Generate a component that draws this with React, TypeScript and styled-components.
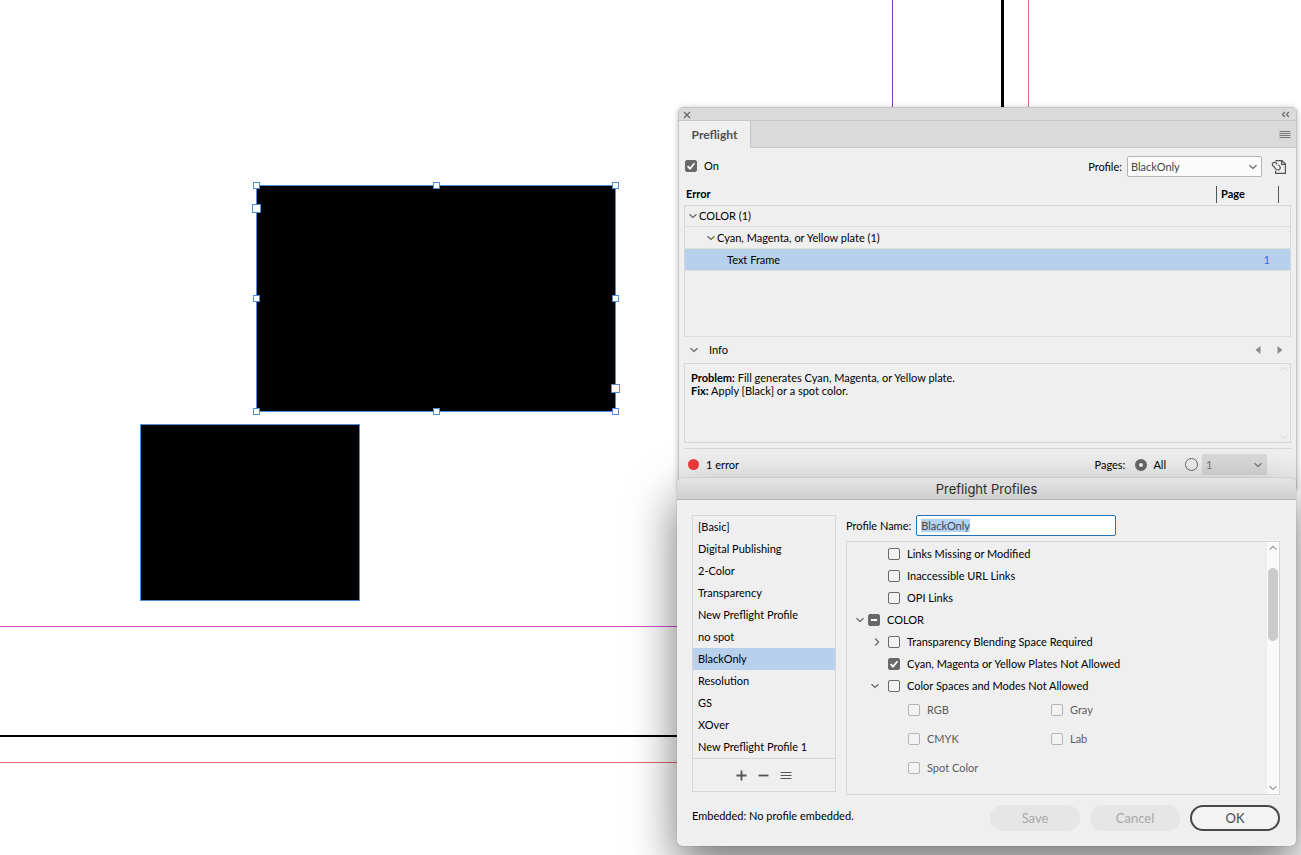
import React, { useEffect, useRef } from "react";
import styled, { createGlobalStyle, css } from "styled-components";

const Global = createGlobalStyle`
  *, *::before, *::after { box-sizing: border-box; }
  body {
    margin: 0;
    background: #fff;
    color: #000;
    font-family: Lato, "Liberation Sans", sans-serif;
    font-size: 11px;
    line-height: 14px;
  }
  button, input, select { font: inherit; color: inherit; margin: 0; }
`;

const line = "#d6d6d6";
const selected = "#b7d1ed";
const glyph = "#555";

/* ---------- document canvas ---------- */

const Desktop = styled.main`
  position: relative;
  height: 100vh;
  min-height: 855px;
  overflow: hidden;
`;

const Guide = styled.div<{ $w: number; $h: number; $right: string; $bottom: string }>`
  position: absolute;
  left: 0;
  top: 0;
  width: ${(p) => p.$w}px;
  height: ${(p) => p.$h}px;
  border-right: ${(p) => p.$right};
  border-bottom: ${(p) => p.$bottom};
`;

const Frame = styled.div<{ $x: number; $y: number; $w: number; $h: number }>`
  position: absolute;
  left: ${(p) => p.$x}px;
  top: ${(p) => p.$y}px;
  width: ${(p) => p.$w}px;
  height: ${(p) => p.$h}px;
  background: #000;
  border: 1px solid #4f8fd8;
`;

const Handles = styled.div`
  position: absolute;
  inset: -1px 0 0 -1px;
`;

const Handle = styled.i<{ $left: string; $top: string; $large?: boolean }>`
  position: absolute;
  left: ${(p) => p.$left};
  top: ${(p) => p.$top};
  width: ${(p) => (p.$large ? 9 : 7)}px;
  height: ${(p) => (p.$large ? 9 : 7)}px;
  margin: ${(p) => (p.$large ? -4 : -3)}px;
  background: #fff;
  border: 1px solid #4f8fd8;
`;

/* ---------- shared parts ---------- */

const Window = styled.section<{ $top: number; $right: number }>`
  position: absolute;
  top: ${(p) => p.$top}px;
  right: ${(p) => p.$right}px;
  width: 619px;
  max-width: 100%;
  background: #efefef;
`;

const IconButton = styled.button<{ $color?: string }>`
  display: grid;
  place-items: center;
  padding: 0;
  border: 0;
  background: none;
  color: ${(p) => p.$color ?? glyph};
  svg { display: block; }
`;

const Row = styled.div<{ $gap?: number }>`
  display: flex;
  align-items: center;
  gap: ${(p) => p.$gap ?? 0}px;
`;

const Spacer = styled.span<{ $w?: number }>`
  flex: ${(p) => (p.$w ? `0 0 ${p.$w}px` : "1")};
`;

const Stack = styled.span`
  display: grid;
  place-items: center;
  flex: none;
  > * { grid-area: 1 / 1; }
  svg { pointer-events: none; }
`;

const Box = styled.input`
  appearance: none;
  width: 12px;
  height: 12px;
  border: 1px solid #6a6a6a;
  border-radius: 2px;
  background: #f3f3f3;
  &:checked { background: #686868; }
  &:indeterminate { background: #686868; }
  &:disabled { border-color: #b4b4b4; }
`;

const Check = styled.label<{ $dim?: boolean }>`
  display: flex;
  align-items: center;
  gap: 7px;
  white-space: nowrap;
  color: ${(p) => (p.$dim ? "#5c5c5c" : "inherit")};
`;

const Radio = styled.input`
  appearance: none;
  width: 13px;
  height: 13px;
  border: 1px solid #6a6a6a;
  border-radius: 50%;
  &:checked {
    width: 12px;
    height: 12px;
    border: 4px solid #686868;
    background: #f5f5f5;
  }
`;

const Select = styled.select`
  appearance: none;
  width: 100%;
  height: 21px;
  padding: 0 20px 0 3px;
  border: 1px solid #b5b5b5;
  border-radius: 2px;
  background: #fbfbfb;
  color: #444;
  &:disabled {
    border-color: #dadada;
    background: #dadada;
    color: #777;
    opacity: 1;
  }
`;

const SelectShell = styled.span<{ $w: number }>`
  display: grid;
  align-items: center;
  width: ${(p) => p.$w}px;
  > * { grid-area: 1 / 1; }
  svg { justify-self: end; margin-right: 4px; pointer-events: none; }
`;

type Dir = "down" | "up" | "right";
const chevrons: Record<Dir, string> = {
  down: "M1.5 3.2 L5 6.5 L8.5 3.2",
  up: "M1.5 6.6 L5 3.3 L8.5 6.6",
  right: "M3.3 1.5 L6.6 5 L3.3 8.5",
};
const Chevron = ({ dir = "down", color = "#666" }: { dir?: Dir; color?: string }) => (
  <svg width="10" height="10" viewBox="0 0 10 10" fill="none" stroke={color} strokeWidth="1.2">
    <path d={chevrons[dir]} />
  </svg>
);

const Bars = ({ rows, color = glyph }: { rows: number[]; color?: string }) => (
  <svg width="12" height="10" viewBox="0 0 12 10" stroke={color} strokeWidth="1">
    {rows.map((y) => (
      <path key={y} d={`M1 ${y}.5H11`} strokeLinecap="square" />
    ))}
  </svg>
);

type TickProps = {
  label: string;
  checked?: boolean;
  mixed?: boolean;
  disabled?: boolean;
};
const Tick = ({ label, checked, mixed, disabled }: TickProps) => {
  const ref = useRef<HTMLInputElement>(null);
  useEffect(() => {
    if (ref.current) ref.current.indeterminate = !!mixed;
  }, [mixed]);
  return (
    <Check $dim={disabled}>
      <Stack>
        <Box ref={ref} type="checkbox" defaultChecked={checked} disabled={disabled} />
        {checked && (
          <svg width="12" height="12" viewBox="0 0 12 12" fill="none" stroke="#fff" strokeWidth="1.8">
            <path d="M2.6 6.2 L5 8.7 L9.4 3.2" />
          </svg>
        )}
        {mixed && (
          <svg width="12" height="12" viewBox="0 0 12 12" fill="#fff">
            <path d="M3 5h6v2H3z" />
          </svg>
        )}
      </Stack>
      {label}
    </Check>
  );
};

/* ---------- Preflight panel ---------- */

const PanelWindow = styled(Window)`
  border: 1px solid #c4c4c4;
  border-radius: 5px 5px 0 0;
  box-shadow: 0 1px 6px rgba(0, 0, 0, 0.25);
`;

const Grip = styled.header`
  display: flex;
  align-items: center;
  justify-content: space-between;
  height: 13px;
  padding: 1px 6px 0 4px;
  border-bottom: 1px solid #c6c6c6;
  border-radius: 4px 4px 0 0;
  background: #dadada;
`;

const TabBar = styled.nav`
  display: flex;
  height: 27px;
  padding-right: 5px;
  background: #dadada;
  box-shadow: inset 0 -1px #c6c6c6;
`;

const Tab = styled.button`
  width: 72px;
  padding: 0;
  border: 0;
  border-right: 1px solid #c6c6c6;
  background: #efefef;
  color: #505050;
  font-size: 12px;
  font-weight: 700;
`;

const PanelBody = styled.div`
  padding: 8px 5px 13px;
`;

const ProfileRow = styled(Row)`
  height: 21px;
  padding: 0 4px 0 1px;
  > label:first-child { margin-bottom: 2px; }
`;

const ErrorTable = styled.table`
  width: 100%;
  margin-top: 7px;
  border-spacing: 0;
  table-layout: fixed;
  th, td { padding: 0; text-align: left; }
  th { height: 21px; padding: 0 0 2px 2px; }
  th:last-child { width: 75px; padding: 0; }
  td { height: 22px; border-bottom: 1px solid #dcdcdc; }
  td:first-child { border-left: 1px solid ${line}; }
  td:last-child { border-right: 1px solid ${line}; }
  tbody tr:first-child td { border-top: 1px solid ${line}; }
`;

const PageHead = styled.span`
  display: block;
  width: 63px;
  height: 17px;
  padding-left: 4px;
  border: solid #555;
  border-width: 0 1px;
  line-height: 16px;
`;

const Indent = styled.div<{ $by: number }>`
  display: flex;
  align-items: center;
  gap: 1px;
  padding-left: ${(p) => p.$by}px;
`;

const ErrorRow = styled.tr<{ $selected?: boolean }>`
  ${(p) =>
    p.$selected &&
    css`
      background: ${selected};
    `}
  td:last-child { padding-right: 20px; text-align: right; color: #0f7aea; }
`;

const Filler = styled.tr`
  && td { height: 66px; }
`;

const InfoHead = styled(Row)`
  height: 26px;
  padding: 0 7px 0 5px;
`;

const InfoBox = styled.div`
  display: flex;
  justify-content: space-between;
  height: 80px;
  padding: 7px 1px 0 6px;
  border: 1px solid ${line};
  p { margin: 0; line-height: 13px; }
`;

const FaintArrows = styled.div`
  display: flex;
  flex-direction: column;
  justify-content: space-between;
  margin-top: -7px;
`;

const StatusRow = styled(Row)`
  height: 27px;
  margin-top: 5px;
  padding: 5px 24px 0 4px;
  border-top: 1px solid ${line};
`;

const Dot = styled.span`
  width: 11px;
  height: 11px;
  margin-right: 7px;
  border-radius: 50%;
  background: #ee3a3c;
`;

const RadioLabel = styled.label`
  display: flex;
  align-items: center;
  gap: 6px;
  margin-left: 10px;
`;

const EmbedIcon = () => (
  <svg width="16" height="16" viewBox="0 0 16 16" fill="none" stroke={glyph} strokeWidth="1.2">
    <path d="M5 2.4V1.6H11L14.4 5V14.4H4.6V11.8" />
    <path d="M10.6 1.6V5.4H14.4" />
    <path d="M5.8 5.4C5.6 3 1.6 2.6 1.3 5.2C1.2 7.2 3.2 7.4 4 9C5 11.4 8.8 12 9.3 9C9.4 7.6 8.8 6.6 7.4 6" />
  </svg>
);

const Preflight = () => (
  <PanelWindow $top={107} $right={4}>
    <Grip>
      <IconButton aria-label="Close" $color="#666">
        <svg width="8" height="8" viewBox="0 0 8 8" stroke="currentColor" strokeWidth="1.3">
          <path d="M1 1L7 7M7 1L1 7" />
        </svg>
      </IconButton>
      <IconButton aria-label="Collapse" $color="#666">
        <svg width="9" height="7" viewBox="0 0 9 7" fill="none" stroke="currentColor" strokeWidth="1.2">
          <path d="M3.8 1L1.5 3.5L3.8 6M7.8 1L5.5 3.5L7.8 6" />
        </svg>
      </IconButton>
    </Grip>
    <TabBar>
      <Tab>Preflight</Tab>
      <Spacer />
      <IconButton aria-label="Panel menu">
        <Bars rows={[1, 3, 5, 7]} color="#777" />
      </IconButton>
    </TabBar>
    <PanelBody>
      <ProfileRow>
        <Tick label="On" checked />
        <Spacer />
        <Row as="label" $gap={5}>
          Profile:
          <SelectShell $w={135}>
            <Select defaultValue="BlackOnly">
              <option>BlackOnly</option>
            </Select>
            <Chevron />
          </SelectShell>
        </Row>
        <Spacer $w={9} />
        <IconButton aria-label="Embed profile">
          <EmbedIcon />
        </IconButton>
      </ProfileRow>
      <ErrorTable>
        <thead>
          <tr>
            <th>Error</th>
            <th>
              <PageHead>Page</PageHead>
            </th>
          </tr>
        </thead>
        <tbody>
          <ErrorRow>
            <td>
              <Indent $by={3}>
                <Chevron />
                COLOR (1)
              </Indent>
            </td>
            <td />
          </ErrorRow>
          <ErrorRow>
            <td>
              <Indent $by={21}>
                <Chevron />
                Cyan, Magenta, or Yellow plate (1)
              </Indent>
            </td>
            <td />
          </ErrorRow>
          <ErrorRow $selected>
            <td>
              <Indent $by={42}>Text Frame</Indent>
            </td>
            <td>1</td>
          </ErrorRow>
          <Filler>
            <td />
            <td />
          </Filler>
        </tbody>
      </ErrorTable>
      <InfoHead>
        <Row $gap={10}>
          <Chevron />
          Info
        </Row>
        <Spacer />
        <Row $gap={14}>
          <IconButton aria-label="Previous" $color="#8c8c8c">
            <svg width="8" height="8" viewBox="0 0 8 8" fill="currentColor">
              <path d="M6.5 0V8L1.5 4Z" />
            </svg>
          </IconButton>
          <IconButton aria-label="Next" $color="#8c8c8c">
            <svg width="8" height="8" viewBox="0 0 8 8" fill="currentColor">
              <path d="M1.5 0V8L6.5 4Z" />
            </svg>
          </IconButton>
        </Row>
      </InfoHead>
      <InfoBox>
        <p>
          <b>Problem:</b> Fill generates Cyan, Magenta, or Yellow plate.
          <br />
          <b>Fix:</b> Apply [Black] or a spot color.
        </p>
        <FaintArrows>
          <Chevron dir="up" color="#e2e2e2" />
          <Chevron color="#e2e2e2" />
        </FaintArrows>
      </InfoBox>
      <StatusRow>
        <Dot />1 error
        <Spacer />
        Pages:
        <RadioLabel>
          <Radio type="radio" name="pages" defaultChecked />
          All
        </RadioLabel>
        <Spacer $w={19} />
        <Row $gap={4}>
          <Radio type="radio" name="pages" aria-label="Page range" />
          <SelectShell $w={65}>
            <Select disabled defaultValue="1" aria-label="Page range value">
              <option>1</option>
            </Select>
            <Chevron color="#777" />
          </SelectShell>
        </Row>
      </StatusRow>
    </PanelBody>
  </PanelWindow>
);

/* ---------- Preflight Profiles dialog ---------- */

const DialogWindow = styled(Window)`
  border-radius: 5px;
  box-shadow: 0 0 1px rgba(0, 0, 0, 0.5), 0 20px 48px rgba(0, 0, 0, 0.55);
`;

const TitleBar = styled.h1`
  height: 22px;
  margin: 0;
  border-bottom: 1px solid #b2b2b2;
  border-radius: 5px 5px 0 0;
  background: linear-gradient(#e4e4e5, #cfcfd0);
  color: #2c2c2c;
  font: 400 13px/22px Inter, sans-serif;
  text-align: center;
`;

const DialogBody = styled.div`
  display: flex;
  gap: 10px;
  padding: 15px 16px 0 15px;
`;

const Profiles = styled.div`
  width: 144px;
  height: 277px;
  border: 1px solid ${line};
  ul { margin: 0; padding: 0; list-style: none; }
`;

const Profile = styled.li<{ $selected?: boolean }>`
  height: 22px;
  padding-left: 5px;
  line-height: 22px;
  background: ${(p) => (p.$selected ? selected : "none")};
`;

const ListTools = styled(Row)`
  justify-content: center;
  height: 33px;
  border-top: 1px solid ${line};
  padding-top: 1px;
`;

const Details = styled.div`
  flex: 1;
`;

const NameInput = styled.input`
  width: 200px;
  height: 21px;
  padding: 0 4px 1px;
  border: 1px solid #2472b8;
  border-radius: 2px;
  outline: none;
  background: #fff;
  color: #444;
  &::selection { background: #b3d3fb; color: #444; }
`;

const Options = styled.div`
  display: flex;
  height: 254px;
  margin-top: 5px;
  border: 1px solid ${line};
`;

const OptionList = styled.div`
  flex: 1;
  padding-top: 1px;
`;

const Option = styled(Row)<{ $by: number }>`
  height: 22px;
  padding-left: ${(p) => p.$by}px;
`;

const Modes = styled.div`
  display: grid;
  grid-template-columns: 143px 143px;
  grid-auto-rows: 29px;
  align-items: center;
  padding-left: 61px;
  margin-top: -2px;
`;

const ScrollTrack = styled.div`
  display: flex;
  flex-direction: column;
  align-items: center;
  justify-content: space-between;
  width: 12px;
  padding: 1px 0;
  background: #fafafa;
`;

const Thumb = styled.div`
  width: 10px;
  height: 73px;
  margin: 15px 0 auto;
  border-radius: 5px;
  background: #cbcbcb;
`;

const Footer = styled.footer`
  display: flex;
  align-items: center;
  gap: 10px;
  padding: 10px 16px 15px 15px;
  > span { flex: 1; margin-top: -4px; }
`;

const Pill = styled.button`
  width: 90px;
  height: 26px;
  padding: 0;
  border: 2px solid #484848;
  border-radius: 13px;
  background: #f3f3f3;
  color: #484848;
  font-size: 13px;
  &:disabled {
    border-color: #e6e6e6;
    background: #e6e6e6;
    color: #a8a8a8;
  }
`;

const profileNames = [
  "[Basic]",
  "Digital Publishing",
  "2-Color",
  "Transparency",
  "New Preflight Profile",
  "no spot",
  "BlackOnly",
  "Resolution",
  "GS",
  "XOver",
  "New Preflight Profile 1",
];

const PreflightProfiles = () => {
  const name = useRef<HTMLInputElement>(null);
  useEffect(() => {
    name.current?.focus();
    name.current?.select();
  }, []);
  return (
    <DialogWindow role="dialog" $top={478} $right={5}>
      <TitleBar>Preflight Profiles</TitleBar>
      <DialogBody>
        <Profiles>
          <ul>
            {profileNames.map((p) => (
              <Profile key={p} $selected={p === "BlackOnly"}>
                {p}
              </Profile>
            ))}
          </ul>
          <ListTools $gap={11}>
            <IconButton aria-label="Add profile">
              <svg width="11" height="11" viewBox="0 0 11 11" fill="currentColor">
                <path d="M4.6 .5h1.8v4.1h4.1v1.8H6.4v4.1H4.6V6.4H.5V4.6h4.1z" />
              </svg>
            </IconButton>
            <IconButton aria-label="Remove profile">
              <svg width="11" height="11" viewBox="0 0 11 11" fill="currentColor">
                <path d="M.5 4.6h10v1.8H.5z" />
              </svg>
            </IconButton>
            <IconButton aria-label="Profile menu">
              <Bars rows={[1, 4, 7]} />
            </IconButton>
          </ListTools>
        </Profiles>
        <Details>
          <Row as="label" $gap={5}>
            Profile Name:
            <NameInput ref={name} defaultValue="BlackOnly" />
          </Row>
          <Options>
            <OptionList>
              <Option $by={41}>
                <Tick label="Links Missing or Modified" />
              </Option>
              <Option $by={41}>
                <Tick label="Inaccessible URL Links" />
              </Option>
              <Option $by={41}>
                <Tick label="OPI Links" />
              </Option>
              <Option $by={8} $gap={3}>
                <Chevron />
                <Tick label="COLOR" mixed />
              </Option>
              <Option $by={25} $gap={6}>
                <Chevron dir="right" />
                <Tick label="Transparency Blending Space Required" />
              </Option>
              <Option $by={41}>
                <Tick label="Cyan, Magenta or Yellow Plates Not Allowed" checked />
              </Option>
              <Option $by={23} $gap={8}>
                <Chevron />
                <Tick label="Color Spaces and Modes Not Allowed" />
              </Option>
              <Modes>
                {["RGB", "Gray", "CMYK", "Lab", "Spot Color"].map((m) => (
                  <Tick key={m} label={m} disabled />
                ))}
              </Modes>
            </OptionList>
            <ScrollTrack>
              <Chevron dir="up" color="#999" />
              <Thumb />
              <Chevron color="#999" />
            </ScrollTrack>
          </Options>
        </Details>
      </DialogBody>
      <Footer>
        <span>Embedded: No profile embedded.</span>
        <Pill disabled>Save</Pill>
        <Pill disabled>Cancel</Pill>
        <Pill>OK</Pill>
      </Footer>
    </DialogWindow>
  );
};

export default function App() {
  return (
    <Desktop>
      <Global />
      <Guide $w={1029} $h={763} $right="1px solid #dd6a70" $bottom="1px solid #dd6a70" />
      <Guide $w={1004} $h={737} $right="3px solid #000" $bottom="2px solid #000" />
      <Guide $w={893} $h={627} $right="1px solid #8437b8" $bottom="1px solid #cf4fd0" />
      <Frame $x={140} $y={424} $w={220} $h={177} />
      <Frame $x={256} $y={185} $w={360} $h={227}>
        <Handles>
          <Handle $left="0%" $top="0%" />
          <Handle $left="50%" $top="0%" />
          <Handle $left="100%" $top="0%" />
          <Handle $left="0%" $top="50%" />
          <Handle $left="100%" $top="50%" />
          <Handle $left="0%" $top="100%" />
          <Handle $left="50%" $top="100%" />
          <Handle $left="100%" $top="100%" />
          <Handle $left="0%" $top="10%" $large />
          <Handle $left="100%" $top="90%" $large />
        </Handles>
      </Frame>
      <Preflight />
      <PreflightProfiles />
    </Desktop>
  );
}
